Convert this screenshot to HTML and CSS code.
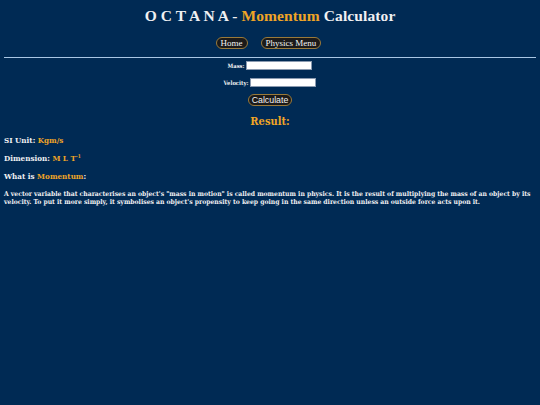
FILE: index.html
```html
<!DOCTYPE html>
<html>
<head>
<meta charset="utf-8">
<link rel="stylesheet" href="styles.css">
</head>
<body>
<h1 class="title">O C T A N A - <span class="gold">Momentum</span> Calculator</h1>
<nav class="nav">
  <a class="pill" href="#">Home</a>
  <a class="pill" href="#">Physics Menu</a>
</nav>
<hr class="rule">
<form class="calc">
  <div class="row"><label class="lbl">Mass:</label><input class="field" type="text"></div>
  <div class="row"><label class="lbl">Velocity:</label><input class="field" type="text"></div>
  <div class="row"><button class="calc-btn" type="button">Calculate</button></div>
</form>
<h2 class="result">Result:</h2>
<p class="info">SI Unit: <span class="gold">Kgm/s</span></p>
<p class="info">Dimension: <span class="gold">M L T<sup class="sup">-1</sup></span></p>
<p class="info">What is <span class="gold">Momentum</span>:</p>
<p class="desc">A vector variable that characterises an object's "mass in motion" is called momentum in physics. It is the result of multiplying the mass of an object by its velocity. To put it more simply, it symbolises an object's propensity to keep going in the same direction unless an outside force acts upon it.</p>
</body>
</html>
```
FILE: styles.css
```css
html, body {
  background: #002a54;
}
body {
  margin: 0;
  padding: 0 4px;
  color: #f0f0f2;
  font-family: "DejaVu Serif Condensed", "DejaVu Serif", Georgia, serif;
}
.gold { color: #f0a526; }
.title {
  margin: 0;
  padding-top: 8px;
  height: 20px;
  line-height: 16px;
  text-align: center;
  font-family: "Liberation Serif", "Times New Roman", serif;
  font-size: 15.5px;
  font-weight: bold;
  letter-spacing: 0.1px;
}
.nav {
  display: flex;
  justify-content: center;
  gap: 13px;
  margin-top: 9px;
  padding-right: 3px;
  height: 12px;
}
.pill {
  display: inline-block;
  box-sizing: border-box;
  height: 12px;
  line-height: 10px;
  padding: 0 4px;
  border: 1px solid #9a7a3a;
  border-radius: 6px;
  background: #1b1a1a;
  color: #f3f3f3;
  text-decoration: none;
  font-family: "Liberation Serif", "Times New Roman", serif;
  font-size: 9px;
}
.rule {
  margin: 8px 0 0 0;
  border: 0;
  height: 1px;
  background: #a9c6e4;
}
.calc {
  display: flex;
  flex-direction: column;
  align-items: center;
  margin-top: 3px;
}
.row {
  display: flex;
  align-items: center;
  justify-content: center;
  height: 9px;
  margin-bottom: 8px;
  gap: 2px;
}
.lbl {
  font-size: 5.8px;
  font-weight: bold;
}
.field {
  box-sizing: border-box;
  width: 66px;
  height: 9px;
  border: 1px solid #8a9ab0;
  background: #ffffff;
  padding: 0;
  margin: 0;
}
.calc-btn {
  box-sizing: border-box;
  height: 12px;
  padding: 0 3px;
  margin-top: 1px;
  border: 1px solid #9a7a3a;
  border-radius: 6px;
  background: #1b1a1a;
  color: #f3f3f3;
  font-family: "Liberation Sans", Arial, sans-serif;
  font-size: 8.8px;
  line-height: 10px;
}
.result {
  margin: 3px 0 0 0;
  text-align: center;
  font-size: 11px;
  line-height: 14px;
  color: #f0a526;
  font-weight: bold;
}
.info {
  margin: 6px 0 0 0;
  font-size: 8px;
  line-height: 10px;
  font-weight: bold;
}
.info + .info { margin-top: 8px; }
.sup {
  font-size: 5px;
  vertical-align: 3px;
  line-height: 0;
}
.desc {
  margin: 9px 0 0 0;
  font-size: 6.75px;
  line-height: 8px;
  font-weight: bold;
}
```
